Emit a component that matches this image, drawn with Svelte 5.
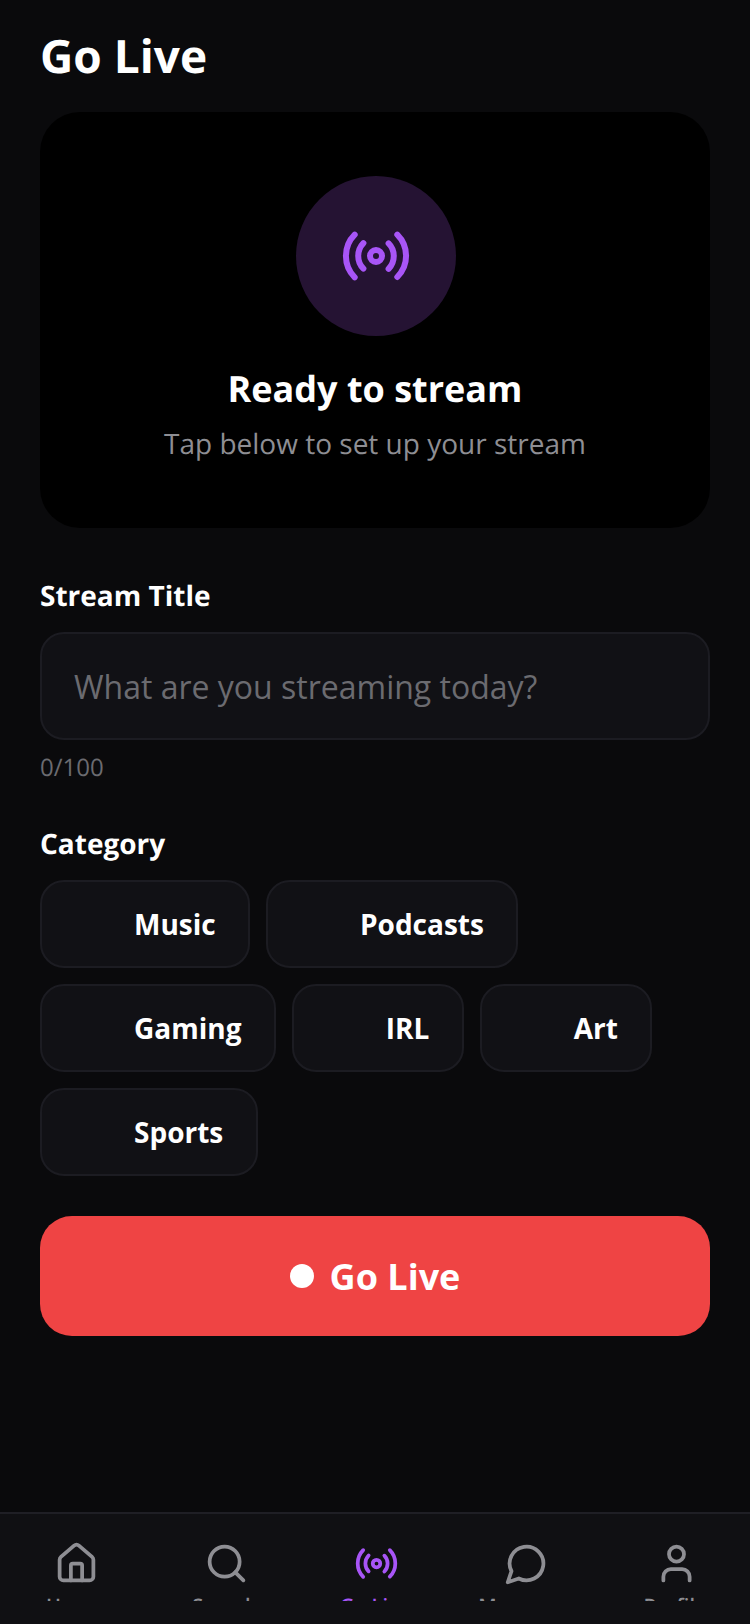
<script lang="ts">
    const categories = ['Music', 'Podcasts', 'Gaming', 'IRL', 'Art', 'Sports'];
    const tabs = [
        { id: 'home', label: 'Home' },
        { id: 'search', label: 'Search' },
        { id: 'live', label: 'Go Live' },
        { id: 'messages', label: 'Messages' },
        { id: 'profile', label: 'Profile' }
    ];
</script>

{#snippet broadcast(size)}
    <svg width={size} height={size} viewBox="0 0 24 24" fill="none" stroke="currentColor" stroke-width="2" stroke-linecap="round" stroke-linejoin="round">
        <path d="M4.9 19.1C1 15.2 1 8.8 4.9 4.9" />
        <path d="M7.8 16.2c-2.3-2.3-2.3-6.1 0-8.5" />
        <circle cx="12" cy="12" r="2" />
        <path d="M16.2 7.8c2.3 2.3 2.3 6.1 0 8.5" />
        <path d="M19.1 4.9C23 8.8 23 15.1 19.1 19" />
    </svg>
{/snippet}

<div class="screen">
    <main>
        <h1>Go Live</h1>

        <section class="preview">
            <div class="circle">{@render broadcast(72)}</div>
            <h2>Ready to stream</h2>
            <p>Tap below to set up your stream</p>
        </section>

        <section class="field">
            <div class="label">Stream Title</div>
            <input type="text" placeholder="What are you streaming today?" />
            <div class="count">0/100</div>
        </section>

        <section class="field cat">
            <div class="label">Category</div>
            <div class="chips">
                {#each categories as name}
                    <button class="chip"><span class="emoji"></span>{name}</button>
                {/each}
            </div>
        </section>

        <button class="go"><span class="dot"></span>Go Live</button>
    </main>

    <nav>
        {#each tabs as tab}
            <div class="tab" class:active={tab.id === 'live'}>
                {#if tab.id === 'home'}
                    <svg width="45" height="45" viewBox="0 0 24 24" fill="none" stroke="currentColor" stroke-width="2" stroke-linecap="round" stroke-linejoin="round">
                        <path d="M15 21v-8a1 1 0 0 0-1-1h-4a1 1 0 0 0-1 1v8" />
                        <path d="M3 10a2 2 0 0 1 .7-1.5l7-6a2 2 0 0 1 2.6 0l7 6A2 2 0 0 1 21 10v9a2 2 0 0 1-2 2H5a2 2 0 0 1-2-2z" />
                    </svg>
                {:else if tab.id === 'search'}
                    <svg width="45" height="45" viewBox="0 0 24 24" fill="none" stroke="currentColor" stroke-width="2" stroke-linecap="round" stroke-linejoin="round">
                        <path d="m21 21-4.3-4.3" />
                        <circle cx="11" cy="11" r="8" />
                    </svg>
                {:else if tab.id === 'live'}
                    {@render broadcast(45)}
                {:else if tab.id === 'messages'}
                    <svg width="45" height="45" viewBox="0 0 24 24" fill="none" stroke="currentColor" stroke-width="2" stroke-linecap="round" stroke-linejoin="round">
                        <path d="M7.9 20A9 9 0 1 0 4 16.1L2 22Z" />
                    </svg>
                {:else}
                    <svg width="45" height="45" viewBox="0 0 24 24" fill="none" stroke="currentColor" stroke-width="2" stroke-linecap="round" stroke-linejoin="round">
                        <path d="M19 21v-2a4 4 0 0 0-4-4H9a4 4 0 0 0-4 4v2" />
                        <circle cx="12" cy="7" r="4" />
                    </svg>
                {/if}
                <span class="tab-label">{tab.label}</span>
            </div>
        {/each}
    </nav>
</div>

<style>
    :global(body) {
        margin: 0;
        background: #0a0a0c;
    }

    .screen {
        width: 750px;
        height: 1624px;
        display: flex;
        flex-direction: column;
        overflow: hidden;
        background: #0a0a0c;
        color: #fff;
        font-family: "Open Sans", sans-serif;
        text-rendering: geometricPrecision;
    }

    main {
        flex: 1;
        padding: 24px 40px 0;
    }

    h1 {
        margin: 0 0 24px;
        font-size: 46px;
        line-height: 64px;
        font-weight: 700;
    }

    .preview {
        height: 416px;
        box-sizing: border-box;
        padding-top: 64px;
        background: #000;
        border-radius: 40px;
        display: flex;
        flex-direction: column;
        align-items: center;
    }

    .circle {
        width: 160px;
        height: 160px;
        margin-left: 2px;
        border-radius: 50%;
        background: #251333;
        color: #a855f7;
        display: flex;
        align-items: center;
        justify-content: center;
    }

    h2 {
        margin: 29px 0 0;
        font-size: 36px;
        line-height: 48px;
        font-weight: 700;
    }

    p {
        margin: 9px 0 0;
        font-size: 28px;
        line-height: 44px;
        color: #8e8e93;
    }

    .field {
        margin-top: 48px;
    }

    .label {
        font-size: 28px;
        line-height: 40px;
        font-weight: 700;
        margin-bottom: 16px;
    }

    input {
        display: block;
        width: 100%;
        height: 108px;
        box-sizing: border-box;
        padding: 0 32px;
        background: #111115;
        border: 2px solid #1c1c22;
        border-radius: 24px;
        font: inherit;
        font-size: 32px;
        color: #fff;
        outline: none;
    }

    input::placeholder {
        color: #6b6b70;
        opacity: 1;
    }

    .count {
        margin-top: 8px;
        font-size: 24px;
        line-height: 40px;
        color: #6b6b70;
    }

    .cat {
        margin-top: 36px;
    }

    .chips {
        display: flex;
        flex-wrap: wrap;
        gap: 16px;
    }

    .chip {
        height: 88px;
        box-sizing: border-box;
        padding: 0 32.3px 1px 32px;
        display: flex;
        align-items: center;
        gap: 16px;
        background: #111115;
        border: 2px solid #1c1c22;
        border-radius: 24px;
        color: #fff;
        font: inherit;
        font-size: 28px;
        font-weight: 700;
    }

    .emoji {
        width: 44px;
    }

    .go {
        width: 100%;
        height: 120px;
        margin-top: 40px;
        display: flex;
        align-items: center;
        justify-content: center;
        gap: 16px;
        background: #ef4444;
        border: none;
        border-radius: 32px;
        color: #fff;
        font: inherit;
        font-size: 36px;
        font-weight: 700;
    }

    .dot {
        width: 24px;
        height: 24px;
        border-radius: 50%;
        background: #fff;
    }

    nav {
        height: 112px;
        box-sizing: border-box;
        flex: none;
        display: flex;
        padding-top: 27px;
        background: #101013;
        border-top: 2px solid #1f1f25;
        overflow: hidden;
    }

    .tab {
        flex: 1;
        height: 60px;
        overflow: hidden;
        display: flex;
        flex-direction: column;
        align-items: center;
        color: #8e8e93;
    }

    .tab.active {
        color: #a855f7;
    }

    .tab svg {
        flex: none;
        margin-left: 2px;
    }

    .tab-label {
        margin-top: 6px;
        font-size: 20px;
        line-height: 28px;
        font-weight: 600;
    }
</style>
